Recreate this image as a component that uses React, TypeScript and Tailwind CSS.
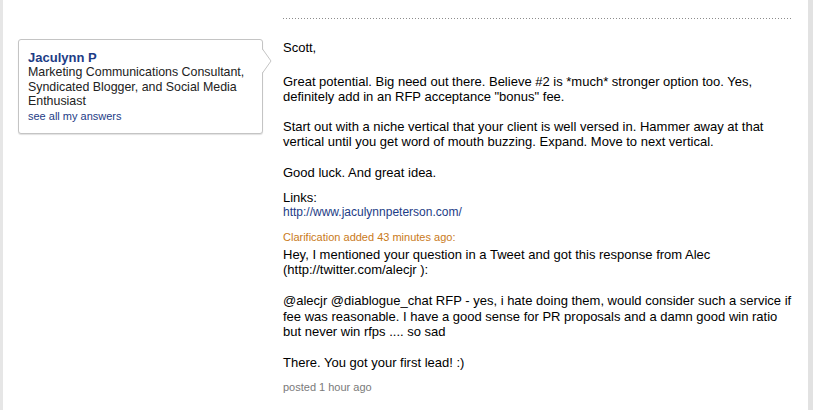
export default function App() {
  return (
    <div className="flex h-[410px] w-full bg-white font-['Liberation_Sans',Arial,sans-serif] text-black">
      <div className="w-[3px] shrink-0 bg-[#e6e6e6]" />

      <div className="flex flex-1">
        {/* author card */}
        <div className="ml-[15px] w-[245px] shrink-0 pt-[39px]">
          <div className="relative rounded-[3px] border border-[#c4c4c4] bg-white px-[9px] pt-[10px] pb-[9px] shadow-[0_1px_1px_rgba(0,0,0,0.12)]">
            <a className="block text-[13px] font-bold leading-[15px] text-[#1d3c86]">Jaculynn P</a>
            <p className="text-[12.4px] leading-[14.7px] text-[#222]">
              Marketing Communications Consultant, Syndicated Blogger, and Social Media Enthusiast
            </p>
            <a className="block text-[11px] leading-[15px] text-[#1d3c86]">see all my answers</a>

            <svg className="absolute left-full top-[9px]" width="10" height="24" viewBox="0 0 10 24">
              <polygon points="0,0 9,12 0,24" fill="#fff" />
              <polyline points="0.5,0 9,12 0.5,24" fill="none" stroke="#c4c4c4" strokeWidth="1" />
            </svg>
          </div>
        </div>

        {/* answer */}
        <div className="ml-[20px] mr-[16px] flex-1 pt-[18px]">
          <div className="h-px bg-[linear-gradient(to_right,#8c8c8c_1px,transparent_1px)] bg-[length:3px_1px]" />

          <div className="mt-[21px] text-[13px] leading-[15.5px]">
            <p>Scott,</p>
            <p className="mt-[18px]">
              Great potential. Big need out there. Believe #2 is *much* stronger option too. Yes,
              <br />
              definitely add in an RFP acceptance "bonus" fee.
            </p>
            <p className="mt-[14px]">
              Start out with a niche vertical that your client is well versed in. Hammer away at that
              <br />
              vertical until you get word of mouth buzzing. Expand. Move to next vertical.
            </p>
            <p className="mt-[15px]">Good luck. And great idea.</p>

            <div className="mt-[9.5px]">
              <p>Links:</p>
              <a className="block text-[12px] text-[#1d3c86]">http://www.jaculynnpeterson.com/</a>
            </div>

            <p className="mt-[9px] text-[11px] leading-[14px] text-[#c97a1a]">Clarification added 43 minutes ago:</p>
            <p className="mt-[3px]">
              Hey, I mentioned your question in a Tweet and got this response from Alec
              <br />
              (http://twitter.com/alecjr ):
              <br />
              <br />
              @alecjr @diablogue_chat RFP - yes, i hate doing them, would consider such a service if
              <br />
              fee was reasonable. I have a good sense for PR proposals and a damn good win ratio
              <br />
              but never win rfps .... so sad
              <br />
              <br />
              There. You got your first lead! :)
            </p>

            <p className="mt-[9px] text-[11px] leading-[14px] text-[#7a7a7a]">posted 1 hour ago</p>
          </div>
        </div>
      </div>

      <div className="w-[5px] shrink-0 bg-[#e2e2e2]" />
    </div>
  );
}
